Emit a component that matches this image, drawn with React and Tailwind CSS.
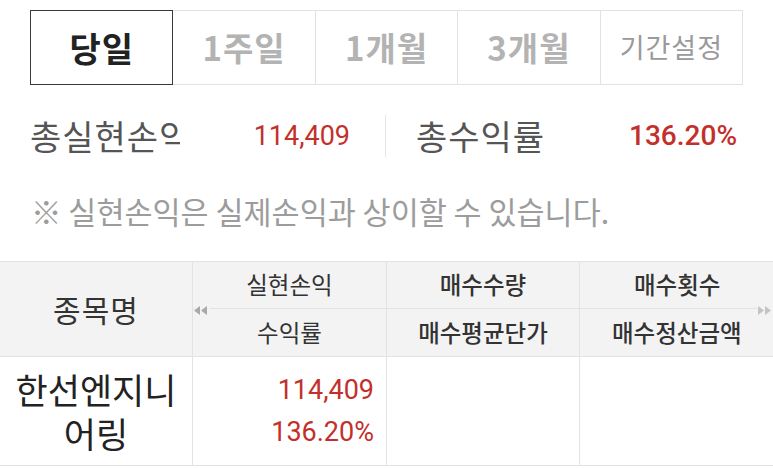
import React from 'react';

const tabs = [
  { id: 'today', label: '당일', active: true },
  { id: '1w', label: '1주일' },
  { id: '1m', label: '1개월' },
  { id: '3m', label: '3개월' },
  { id: 'custom', label: '기간설정', small: true },
];

const DoubleArrow = ({ dir }) => (
  <svg width="14" height="9" viewBox="0 0 14 9" className="block">
    {dir === 'left' ? (
      <>
        <polygon points="6,0 6,9 0,4.5" fill="#a9a9a9" />
        <polygon points="13,0 13,9 7,4.5" fill="#a9a9a9" />
      </>
    ) : (
      <>
        <polygon points="1,0 1,9 7,4.5" fill="#c4c4c4" />
        <polygon points="8,0 8,9 14,4.5" fill="#c4c4c4" />
      </>
    )}
  </svg>
);

const num = "font-['Roboto','Noto_Sans_CJK_KR',sans-serif]";

export default function App() {
  return (
    <div className="w-[773px] h-[468px] overflow-hidden bg-white font-['Noto_Sans_CJK_KR','Noto_Sans',sans-serif]">
      {/* Period tabs */}
      <div className="mt-[10px] mx-[30px] h-[75px] flex">
        {tabs.map((t, i) => (
          <button
            key={t.id}
            className={`relative flex-1 flex items-center justify-center tracking-[1px] ${i > 0 ? '-ml-px' : ''} ${
              t.active
                ? 'z-10 border-[1.5px] border-[#3a3a3a] text-[#222] font-bold text-[34px]'
                : t.small
                ? 'border border-[#e2e2e2] text-[#9a9a9a] text-[27px]'
                : 'border border-[#e2e2e2] text-[#b3b3b3] font-semibold text-[33px]'
            }`}
          >
            {t.label}
          </button>
        ))}
      </div>

      {/* Summary */}
      <div className="mt-[30px] mx-[30px] h-[42px] flex items-center">
        <div className="w-[355px] flex items-center justify-between pr-[35px]">
          <div className="w-[150px] overflow-hidden whitespace-nowrap text-[34px] tracking-[1px] text-[#555] leading-none">
            총실현손익
          </div>
          <div className={`${num} text-[27px] text-[#c3302c] leading-none`}>114,409</div>
        </div>
        <div className="w-px h-[42px] bg-[#e6e6e6]" />
        <div className="flex-1 flex items-center justify-between pl-[30px] pr-[6px]">
          <div className="text-[34px] tracking-[1px] text-[#555] leading-none">총수익률</div>
          <div className={`${num} text-[28px] text-[#c3302c] font-medium leading-none`}>136.20%</div>
        </div>
      </div>

      {/* Notice */}
      <div className="mt-[36px] ml-[31px] text-[30.5px] leading-[36px] text-[#9c9c9c] whitespace-nowrap">
        ※ 실현손익은 실제손익과 상이할 수 있습니다.
      </div>

      {/* Table */}
      <div className="relative mt-[32px] w-[800px] border-t border-[#e3e3e3]">
        <div className="grid grid-cols-[193px_194px_193px_220px] bg-[#f3f3f3] text-[#333]">
          <div className="row-span-2 flex items-center justify-center text-[30px] tracking-[1px] border-r border-[#e3e3e3]">
            종목명
          </div>
          <div className="h-[47px] flex items-center justify-center text-[23.5px] border-r border-b border-[#e3e3e3]">
            실현손익
          </div>
          <div className="h-[47px] flex items-center justify-center text-[23.5px] font-medium border-r border-b border-[#e3e3e3]">
            매수수량
          </div>
          <div className="h-[47px] flex items-center pl-[54px] text-[23.5px] font-medium border-b border-[#e3e3e3]">
            매수횟수
          </div>
          <div className="h-[47px] flex items-center justify-center text-[23.5px] border-r border-[#e3e3e3]">
            수익률
          </div>
          <div className="h-[47px] flex items-center justify-center text-[23.5px] font-medium border-r border-[#e3e3e3]">
            매수평균단가
          </div>
          <div className="h-[47px] flex items-center pl-[32px] text-[23.5px] font-medium">
            매수정산금액
          </div>
        </div>

        <div className="grid grid-cols-[193px_194px_193px_220px] border-t border-b border-[#e3e3e3]">
          <div className="h-[108px] flex items-center justify-center text-center text-[35px] leading-[44px] text-[#222] border-r border-[#e3e3e3] px-2">
            한선엔지니어링
          </div>
          <div className={`${num} h-[108px] flex flex-col items-end justify-center pr-[12px] text-[27px] leading-[42px] text-[#c3302c] border-r border-[#e3e3e3]`}>
            <span>114,409</span>
            <span>136.20%</span>
          </div>
          <div className="h-[108px] border-r border-[#e3e3e3]" />
          <div className="h-[108px]" />
        </div>

        {/* scroll arrows */}
        <div className="absolute left-[194px] top-[42px] w-[16px] h-[12px] flex items-center bg-[#f3f3f3]">
          <DoubleArrow dir="left" />
        </div>
        <div className="absolute left-[757px] top-[42px] w-[18px] h-[12px] flex items-center bg-[#f3f3f3]">
          <DoubleArrow dir="right" />
        </div>
      </div>
    </div>
  );
}
